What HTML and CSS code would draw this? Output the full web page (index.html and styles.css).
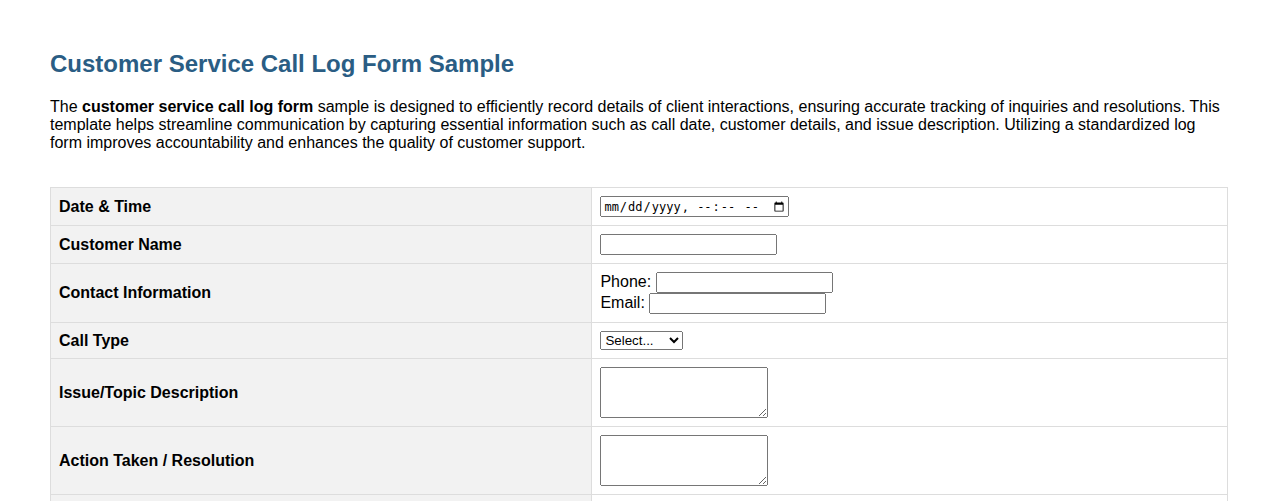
FILE: index.html
```html
<!DOCTYPE html>
<html>
<head>
  <meta charset="UTF-8">
  <title>Customer Service Call Log Form Sample</title>
  <link rel="stylesheet" href="styles.css">
</head>
<body>
<div class="page">
  <h2 class="title">Customer Service Call Log Form Sample</h2>
  <p class="intro">The <strong>customer service call log form</strong> sample is designed to efficiently record details of client interactions, ensuring accurate tracking of inquiries and resolutions. This template helps streamline communication by capturing essential information such as call date, customer details, and issue description. Utilizing a standardized log form improves accountability and enhances the quality of customer support.</p>

  <form>
    <table class="log">
      <tr>
        <th>Date &amp; Time</th>
        <td><input class="when" type="datetime-local"></td>
      </tr>
      <tr>
        <th>Customer Name</th>
        <td><input class="field" type="text"></td>
      </tr>
      <tr>
        <th>Contact Information</th>
        <td>Phone: <input class="field" type="text"><br>Email: <input class="field" type="email"></td>
      </tr>
      <tr>
        <th>Call Type</th>
        <td>
          <select>
            <option>Select...</option>
            <option>Inquiry</option>
            <option>Complaint</option>
            <option>Support</option>
            <option>Feedback</option>
          </select>
        </td>
      </tr>
      <tr>
        <th>Issue/Topic Description</th>
        <td><textarea class="notes" rows="3"></textarea></td>
      </tr>
      <tr>
        <th>Action Taken / Resolution</th>
        <td><textarea class="notes" rows="3"></textarea></td>
      </tr>
      <tr>
        <th>Follow-Up Required</th>
        <td><input type="checkbox"> Yes</td>
      </tr>
      <tr>
        <th>Agent Name</th>
        <td><input class="field" type="text"></td>
      </tr>
    </table>
  </form>
</div>
</body>
</html>
```

FILE: styles.css
```css
body{margin:0;font-family:"Liberation Sans",Arial,sans-serif;font-size:16px;color:#000;background:#fff;}
.page{padding:30px 50px;}
.title{color:#2a5d84;font-size:24px;margin:20px 0;}
.intro{margin:20px 0 16px;}
.log{width:100%;border-collapse:collapse;margin-top:35px;}
.log th,.log td{border:1px solid #ddd;padding:8px;text-align:left;}
.log th{width:46%;background:#f2f2f2;font-weight:bold;}
.field{box-sizing:border-box;width:177px;height:21px;}
.when{box-sizing:border-box;width:189px;height:21px;font-size:12px;}
.notes{box-sizing:border-box;width:168px;height:51px;vertical-align:middle;}
```
